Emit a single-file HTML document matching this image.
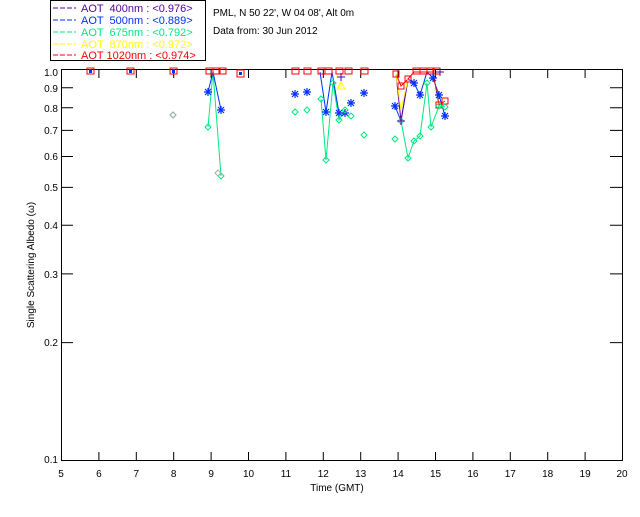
<!DOCTYPE html>
<html><head><style>
body{margin:0;background:#fff;width:640px;height:512px;overflow:hidden}
svg text{font-family:"Liberation Sans",sans-serif;font-size:10px}
</style></head><body>
<svg width="640" height="512" viewBox="0 0 640 512" xmlns="http://www.w3.org/2000/svg">
<rect x="50.5" y="0.5" width="155" height="60" fill="none" stroke="#000"/>
<g style="font-size:11px">
<line x1="53" y1="8" x2="76" y2="8" stroke="#5a00a0" stroke-dasharray="5,2"/><text x="81" y="12" fill="#5a00a0" xml:space="preserve" style="font-size:11px">AOT  400nm : &lt;0.976&gt;</text>
<line x1="53" y1="20" x2="76" y2="20" stroke="#0030ff" stroke-dasharray="5,2"/><text x="81" y="24" fill="#0030ff" xml:space="preserve" style="font-size:11px">AOT  500nm : &lt;0.889&gt;</text>
<line x1="53" y1="32" x2="76" y2="32" stroke="#00e880" stroke-dasharray="5,2"/><text x="81" y="36" fill="#00e880" xml:space="preserve" style="font-size:11px">AOT  675nm : &lt;0.792&gt;</text>
<line x1="53" y1="44" x2="76" y2="44" stroke="#ffff00" stroke-dasharray="5,2"/><text x="81" y="48" fill="#ffff00" xml:space="preserve" style="font-size:11px">AOT  870nm : &lt;0.972&gt;</text>
<line x1="53" y1="55" x2="76" y2="55" stroke="#ff0000" stroke-dasharray="5,2"/><text x="81" y="59" fill="#ff0000" xml:space="preserve" style="font-size:11px">AOT 1020nm : &lt;0.974&gt;</text>
</g>
<text x="213" y="16">PML, N 50 22', W 04 08', Alt 0m</text>
<text x="213" y="34">Data from: 30 Jun 2012</text>
<rect x="61.5" y="69.5" width="561" height="391" fill="none" stroke="#000"/>
<g stroke="#000">
<path d="M98.9 70v8M136.3 70v8M173.7 70v8M211.1 70v8M248.5 70v8M285.9 70v8M323.3 70v8M360.7 70v8M398.1 70v8M435.5 70v8M472.9 70v8M510.3 70v8M547.7 70v8M585.1 70v8"/>
<path d="M98.9 460v-8M136.3 460v-8M173.7 460v-8M211.1 460v-8M248.5 460v-8M285.9 460v-8M323.3 460v-8M360.7 460v-8M398.1 460v-8M435.5 460v-8M472.9 460v-8M510.3 460v-8M547.7 460v-8M585.1 460v-8"/>
<path d="M61 87.8h12M61 107.8h12M61 130.4h12M61 156.5h12M61 187.4h12M61 225.2h12M61 273.9h12M61 342.6h12"/>
<path d="M622 87.8h-12M622 107.8h-12M622 130.4h-12M622 156.5h-12M622 187.4h-12M622 225.2h-12M622 273.9h-12M622 342.6h-12"/>
</g>
<g text-anchor="end">
<text x="58" y="76">1.0</text><text x="58" y="92">0.9</text><text x="58" y="112">0.8</text><text x="58" y="134">0.7</text><text x="58" y="160">0.6</text><text x="58" y="191">0.5</text><text x="58" y="229">0.4</text><text x="58" y="278">0.3</text><text x="58" y="346">0.2</text><text x="58" y="463">0.1</text>
</g>
<g text-anchor="middle">
<text x="61" y="477">5</text><text x="98.9" y="477">6</text><text x="136.3" y="477">7</text><text x="173.7" y="477">8</text><text x="211.1" y="477">9</text><text x="248.5" y="477">10</text><text x="285.9" y="477">11</text><text x="323.3" y="477">12</text><text x="360.7" y="477">13</text><text x="398.1" y="477">14</text><text x="435.5" y="477">15</text><text x="472.9" y="477">16</text><text x="510.3" y="477">17</text><text x="547.7" y="477">18</text><text x="585.1" y="477">19</text><text x="622" y="477">20</text>
<text x="337" y="491">Time (GMT)</text>
<text transform="translate(34,265) rotate(-90)">Single Scattering Albedo (ω)</text>
</g>
<g fill="none" stroke-width="1">
<polyline stroke="#00e880" points="208,127 213,72 221,176"/>
<polyline stroke="#00e880" points="321,99 326,160 333,83 339,120 345,110"/>
<polyline stroke="#00e880" points="401,121 408,158 414,141 420,136 427,83 431,127 439,106 445,107"/>
<polyline stroke="#0030ff" points="208,92 213,72 221,110"/>
<polyline stroke="#0030ff" points="320,72 326,112 332,72 339,113 345,113"/>
<polyline stroke="#0030ff" points="395,106 401,121 408,79 414,83 420,95 427,72 433,78 439,95 445,116"/>
<polyline stroke="#5a00a0" points="396,74 401,121 408,79"/>
<polyline stroke="#ff0000" points="396,74 401,86 408,79 414,72 433,72 439,105 445,101"/>
<polyline stroke="#ffff00" points="396,74 401,110 408,79"/>
</g>
<g fill="none" stroke="#ff0000">
<rect x="87" y="68" width="7" height="6"/><rect x="127" y="68" width="7" height="6"/><rect x="170" y="68" width="7" height="6"/>
<rect x="206" y="68" width="7" height="6"/><rect x="213" y="68" width="7" height="6"/><rect x="219" y="68" width="7" height="6"/>
<rect x="237" y="70" width="7" height="7"/>
<rect x="292" y="68" width="7" height="6"/><rect x="304" y="68" width="7" height="6"/><rect x="318" y="68" width="7" height="6"/><rect x="325" y="68" width="7" height="6"/><rect x="336" y="68" width="7" height="6"/><rect x="345" y="68" width="7" height="6"/><rect x="361" y="68" width="7" height="6"/>
<rect x="393" y="71" width="6" height="6"/><rect x="398" y="83" width="6" height="6"/><rect x="405" y="76" width="6" height="6"/>
<rect x="413" y="68" width="7" height="6"/><rect x="420" y="68" width="7" height="6"/><rect x="427" y="68" width="7" height="6"/><rect x="433" y="68" width="7" height="6"/><rect x="436" y="102" width="6" height="6"/><rect x="442" y="98" width="6" height="6"/>
</g>
<g fill="#0030ff"><rect x="89" y="69" width="3" height="4"/><rect x="129" y="69" width="3" height="4"/><rect x="172" y="69" width="3" height="4"/><rect x="239" y="72" width="3" height="3"/></g>
<g stroke="#0030ff" stroke-width="1.2">
<path id="s" d="M-4 0h8M0-4v8M-3-3l6 6M-3 3l6-6" transform="translate(208,92)"/>
<use href="#s" x="13" y="18"/><use href="#s" x="87" y="2"/><use href="#s" x="99" y="0"/><use href="#s" x="118" y="20"/><use href="#s" x="131" y="21"/><use href="#s" x="137" y="21"/><use href="#s" x="143" y="11"/><use href="#s" x="156" y="1"/><use href="#s" x="187" y="14"/><use href="#s" x="206" y="-9"/><use href="#s" x="212" y="3"/><use href="#s" x="225" y="-14"/><use href="#s" x="231" y="3"/><use href="#s" x="237" y="24"/>
</g>
<g fill="none" stroke="#00e880">
<path id="d" d="M0-3l3 3-3 3-3-3z" transform="translate(208,127)"/>
<use href="#d" x="13" y="49"/><use href="#d" x="-35" y="-12"/><use href="#d" x="87" y="-15"/><use href="#d" x="99" y="-17"/><use href="#d" x="113" y="-28"/><use href="#d" x="118" y="33"/><use href="#d" x="125" y="-44"/><use href="#d" x="131" y="-7"/><use href="#d" x="137" y="-17"/><use href="#d" x="143" y="-11"/><use href="#d" x="156" y="8"/><use href="#d" x="187" y="12"/><use href="#d" x="193" y="-6"/><use href="#d" x="200" y="31"/><use href="#d" x="206" y="14"/><use href="#d" x="212" y="9"/><use href="#d" x="219" y="-44"/><use href="#d" x="223" y="0"/><use href="#d" x="231" y="-21"/><use href="#d" x="237" y="-20"/>
</g>
<path d="M218 170l3 3-3 3-3-3z" fill="none" stroke="#aaa"/>
<path d="M173 112l3 3-3 3-3-3z" fill="none" stroke="#aaa"/>
<path d="M341 77v10M336 77h10M341 82l-4 7h8z" fill="none" stroke="#ffff00"/>
<path d="M341 73v8M337 77h8" stroke="#5a00a0"/>
<path d="M401 117v8M397 121h8M440 68v8M436 72h8" stroke="#5a00a0"/>
</svg>
</body></html>
